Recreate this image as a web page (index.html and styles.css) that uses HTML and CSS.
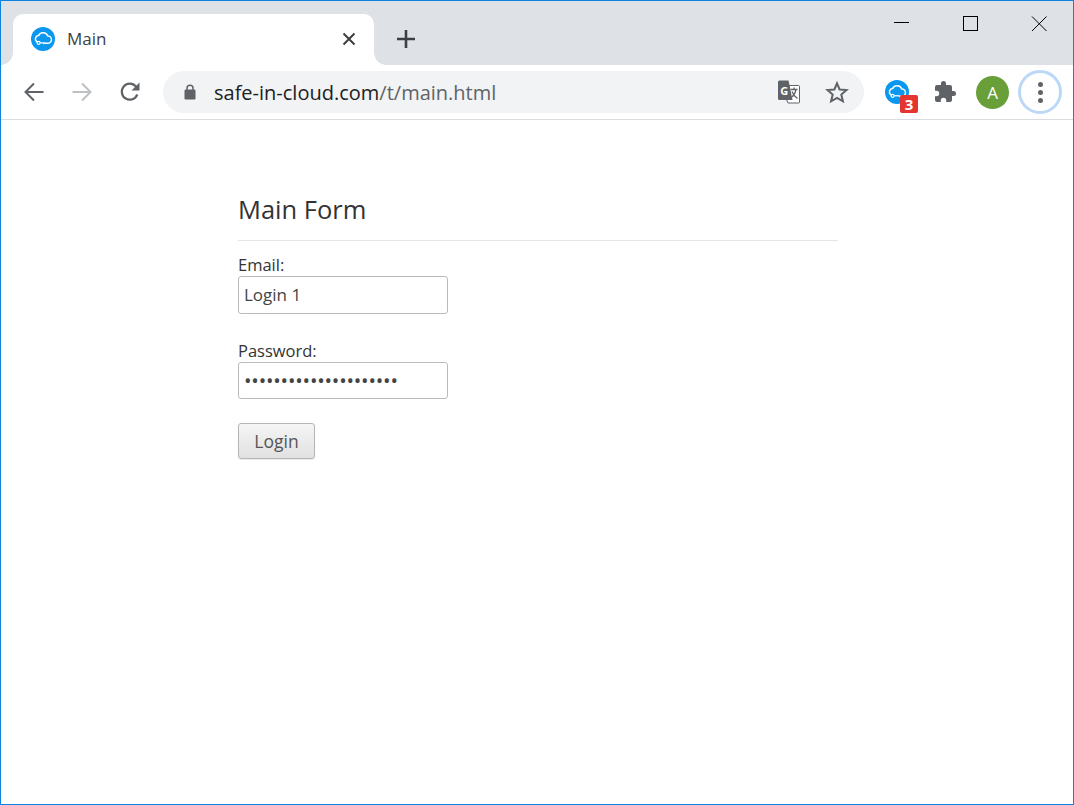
FILE: index.html
```html
<!DOCTYPE html>
<html lang="en">
<head>
<meta charset="utf-8">
<title>Main</title>
<link rel="stylesheet" href="styles.css">
</head>
<body>
<div class="window">
  <div class="tabstrip">
    <div class="tab">
      <svg class="favicon" viewBox="0 0 24 24" width="24" height="24"><circle cx="12" cy="12" r="12" fill="#0a97f0"/><path d="M5.600 14.600A3.400 3.400 0 0 1 7.600 8.600 5 5 0 0 1 16.800 9 3.600 3.600 0 0 1 17 16.200H14.500" fill="none" stroke="#fff" stroke-width="1.500" stroke-linecap="round"/><circle cx="7.600" cy="15.800" r="1.500" fill="none" stroke="#fff" stroke-width="1.200"/><path d="M9.100 15.800H14.500M12.800 15.800V17.300" fill="none" stroke="#fff" stroke-width="1.200"/></svg>
      <span class="tab-title">Main</span>
      <svg class="tab-close" viewBox="0 0 14 14" width="14" height="14"><path d="M1.500 1.500 12.500 12.500M12.500 1.500 1.500 12.500" stroke="#3c4043" stroke-width="2" fill="none"/></svg>
    </div>
    <svg class="newtab" viewBox="0 0 20 20" width="20" height="20"><path d="M10 1V19M1 10H19" stroke="#3c4043" stroke-width="2.600" fill="none"/></svg>
    <div class="winctrls">
      <svg viewBox="0 0 16 16" width="16" height="16"><path d="M1 6.500H16" stroke="#000" fill="none"/></svg>
      <svg viewBox="0 0 16 16" width="16" height="16"><rect x="1.500" y=".5" width="14" height="14" stroke="#000" stroke-width="1" fill="none"/></svg>
      <svg viewBox="0 0 16 16" width="16" height="16"><path d="M1 .5 15.500 15M15.500 .5 1 15" stroke="#000" fill="none"/></svg>
    </div>
  </div>
  <div class="toolbar">
    <svg class="nav" viewBox="0 0 24 24" width="24" height="24"><path d="M21.500 12H4M12 3.500 3.500 12 12 20.500" fill="none" stroke="#5f6368" stroke-width="2"/></svg>
    <svg class="nav" viewBox="0 0 24 24" width="24" height="24"><path d="M2.500 12H20M12 3.500 20.500 12 12 20.500" fill="none" stroke="#bdc1c6" stroke-width="2"/></svg>
    <svg class="nav" viewBox="0 0 24 24" width="24" height="24"><path d="M19.300 14.500A8 8 0 1 1 18 6.600" fill="none" stroke="#5f6368" stroke-width="2.200"/><path d="M21.500 2.500V10.500H13.500Z" fill="#5f6368"/></svg>
    <div class="omnibox">
      <svg class="lock" viewBox="0 0 12 16" width="12" height="16"><path d="M3 6.500V4.300a3 3 0 0 1 6 0V6.500" fill="none" stroke="#5f6368" stroke-width="1.500"/><rect x="0.500" y="5.500" width="11" height="10" rx="1.200" fill="#5f6368"/></svg>
      <span class="url"><span class="host">safe-in-cloud.com</span>/t/main.html</span>
      <svg class="translate" viewBox="0 0 24 24" width="24" height="24"><path d="M9.500 19.500 11 23H21.500A1 1 0 0 0 22.500 22V6.500A1 1 0 0 0 21.500 5.500H12V19.500Z" fill="#fff" stroke="#5f6368"/><path d="M2.500 .5H11.500L15.500 20H2.500A1.500 1.500 0 0 1 1 18.500V2A1.500 1.500 0 0 1 2.500 .5Z" fill="#5f6368"/><text class="translate-g" x="3.200" y="14.500">G</text><path d="M13.500 9.500H20.500M17 7.500V9.500M19 9.500C18 14 16 16.500 13.500 18M15 11.500C16 14.500 18 16.800 20.500 18.500" fill="none" stroke="#5f6368" stroke-width="1.300"/></svg>
      <svg class="star" viewBox="0 0 24 24" width="24" height="24"><path d="M12 3.300 14.600 9.500 21.500 10.100 16.300 14.600 17.900 21.300 12 17.800 6.100 21.300 7.700 14.600 2.500 10.100 9.400 9.500Z" fill="none" stroke="#5f6368" stroke-width="2"/></svg>
    </div>
    <div class="ext-cloud">
      <svg viewBox="0 0 24 24" width="24" height="24"><circle cx="12" cy="12" r="12" fill="#0a97f0"/><path d="M5.600 14.600A3.400 3.400 0 0 1 7.600 8.600 5 5 0 0 1 16.800 9 3.600 3.600 0 0 1 17 16.200H14.500" fill="none" stroke="#fff" stroke-width="1.500" stroke-linecap="round"/><circle cx="7.600" cy="15.800" r="1.500" fill="none" stroke="#fff" stroke-width="1.200"/><path d="M9.100 15.800H14.500" fill="none" stroke="#fff" stroke-width="1.200"/></svg>
      <span class="badge">3</span>
    </div>
    <svg class="puzzle" viewBox="0 0 24 24" width="24" height="24"><path d="M20.500 11H19V7a2 2 0 0 0-2-2h-4V3.500a2.500 2.500 0 0 0-5 0V5H4a2 2 0 0 0-2 2v3.800h1.500a2.700 2.700 0 0 1 0 5.400H2V20a2 2 0 0 0 2 2h3.800v-1.500a2.700 2.700 0 0 1 5.400 0V22H17a2 2 0 0 0 2-2v-4h1.500a2.500 2.500 0 0 0 0-5z" fill="#5f6368"/></svg>
    <div class="avatar">A</div>
    <div class="menu"><i></i><i></i><i></i></div>
  </div>
  <main class="page">
    <form class="form">
      <h1 class="title">Main Form</h1>
      <div class="field">
        <label class="label" for="email">Email:</label>
        <input class="input" id="email" type="text" value="Login 1">
      </div>
      <div class="field field-last">
        <label class="label" for="pw">Password:</label>
        <input class="input input-pw" id="pw" type="password" value="aaaaaaaaaaaaaaaaaaaaa">
      </div>
      <button class="btn" type="button">Login</button>
    </form>
  </main>
</div>
</body>
</html>
```

FILE: styles.css
```css
* { box-sizing: border-box; }
html, body { margin: 0; padding: 0; height: 100%; background: #fff; }
body { font-family: "Open Sans", "Noto Sans", sans-serif; overflow: hidden; }

.window {
  width: 1074px;
  height: 805px;
  border: 1px solid #0a84e0;
  display: flex;
  flex-direction: column;
}

.tabstrip {
  height: 64px;
  flex: none;
  background: #dee1e6;
  display: flex;
  align-items: flex-start;
}
.tab {
  position: relative;
  width: 361px;
  height: 51px;
  margin: 13px 0 0 12px;
  background: #fff;
  border-radius: 10px 10px 0 0;
  display: flex;
  align-items: center;
  padding: 0 18px 1px 18px;
}
.tab::before, .tab::after {
  content: "";
  position: absolute;
  bottom: 0;
  width: 12px;
  height: 12px;
}
.tab::before {
  left: -12px;
  background: radial-gradient(circle at 0 0, #dee1e6 11.500px, #fff 12px);
}
.tab::after {
  right: -12px;
  background: radial-gradient(circle at 100% 0, #dee1e6 11.500px, #fff 12px);
}
.favicon { flex: none; }
.tab-title {
  margin: 0 0 2px 12px;
  font-size: 17px;
  color: #3c4043;
  flex: 1;
}
.tab-close { flex: none; }
.newtab { flex: none; margin: 28px 0 0 22px; }
.winctrls {
  margin-left: auto;
  display: flex;
  gap: 53px;
  padding: 15px 26px 0 0;
}

.toolbar {
  height: 55px;
  flex: none;
  background: #fff;
  border-bottom: 1px solid #dadce0;
  display: flex;
  align-items: center;
  padding: 0 12px 0 21px;
}
.nav { flex: none; margin-right: 24px; }
.nav:nth-child(3) { margin-right: 21px; }
.omnibox {
  width: 701px;
  height: 42px;
  flex: none;
  border-radius: 21px;
  background: #f1f3f4;
  display: flex;
  align-items: center;
  padding: 0 15px 0 21px;
}
.lock { flex: none; }
.url {
  margin-left: 18px;
  flex: 1;
  font-size: 20px;
  color: #5f6368;
  white-space: nowrap;
}
.host { color: #202124; }
.translate { flex: none; margin-right: 24px; }
.translate-g { font: 700 11px "Open Sans", sans-serif; fill: #fff; }
.star { flex: none; }

.ext-cloud { position: relative; width: 24px; height: 24px; margin-left: 21px; flex: none; }
.ext-cloud svg { display: block; }
.badge {
  position: absolute;
  left: 15px;
  top: 15px;
  width: 18px;
  height: 18px;
  border-radius: 2px;
  background: #e53530;
  color: #fff;
  font: 700 15px/18px "Open Sans", sans-serif;
  text-align: center;
}
.puzzle { flex: none; margin-left: 24px; }
.avatar {
  flex: none;
  width: 33px;
  height: 33px;
  margin-left: 19px;
  border-radius: 50%;
  background: #689f38;
  color: #fff;
  font-size: 17px;
  line-height: 33px;
  text-align: center;
}
.menu {
  flex: none;
  width: 44px;
  height: 44px;
  margin-left: 9px;
  border: 3px solid #bcd8f8;
  border-radius: 50%;
  display: flex;
  flex-direction: column;
  align-items: center;
  justify-content: center;
  gap: 3px;
}
.menu i { display: block; width: 5px; height: 5px; border-radius: 50%; background: #5f6368; }

.page { flex: 1; padding: 71px 0 0 237px; }
.form { width: 600px; }
.title {
  margin: 0 0 12px;
  padding-bottom: 13px;
  border-bottom: 1px solid #e5e5e5;
  font-size: 25.500px;
  line-height: 36px;
  font-weight: 400;
  color: #333;
}
.field { margin-bottom: 25px; }
.field-last { margin-bottom: 24px; }
.label {
  display: block;
  font-size: 16.500px;
  line-height: 23px;
  color: #333;
}
.input {
  display: block;
  width: 210px;
  height: 38px;
  padding: 0 5px 2px;
  border: 1px solid #bbb;
  border-radius: 3px;
  font: 17px "Open Sans", sans-serif;
  color: #444;
  background: #fff;
  outline: none;
}
.input-pw { height: 37px; padding-bottom: 0; font-size: 20px; letter-spacing: -.2px; }
.btn {
  display: block;
  width: 77px;
  height: 36px;
  padding: 0;
  border: 1px solid #b5b5b5;
  border-radius: 3px;
  background: linear-gradient(#f5f5f5, #e1e1e1);
  box-shadow: 0 1px 1px rgba(0, 0, 0, .08);
  font: 17.500px "Open Sans", sans-serif;
  color: #555;
}
```
